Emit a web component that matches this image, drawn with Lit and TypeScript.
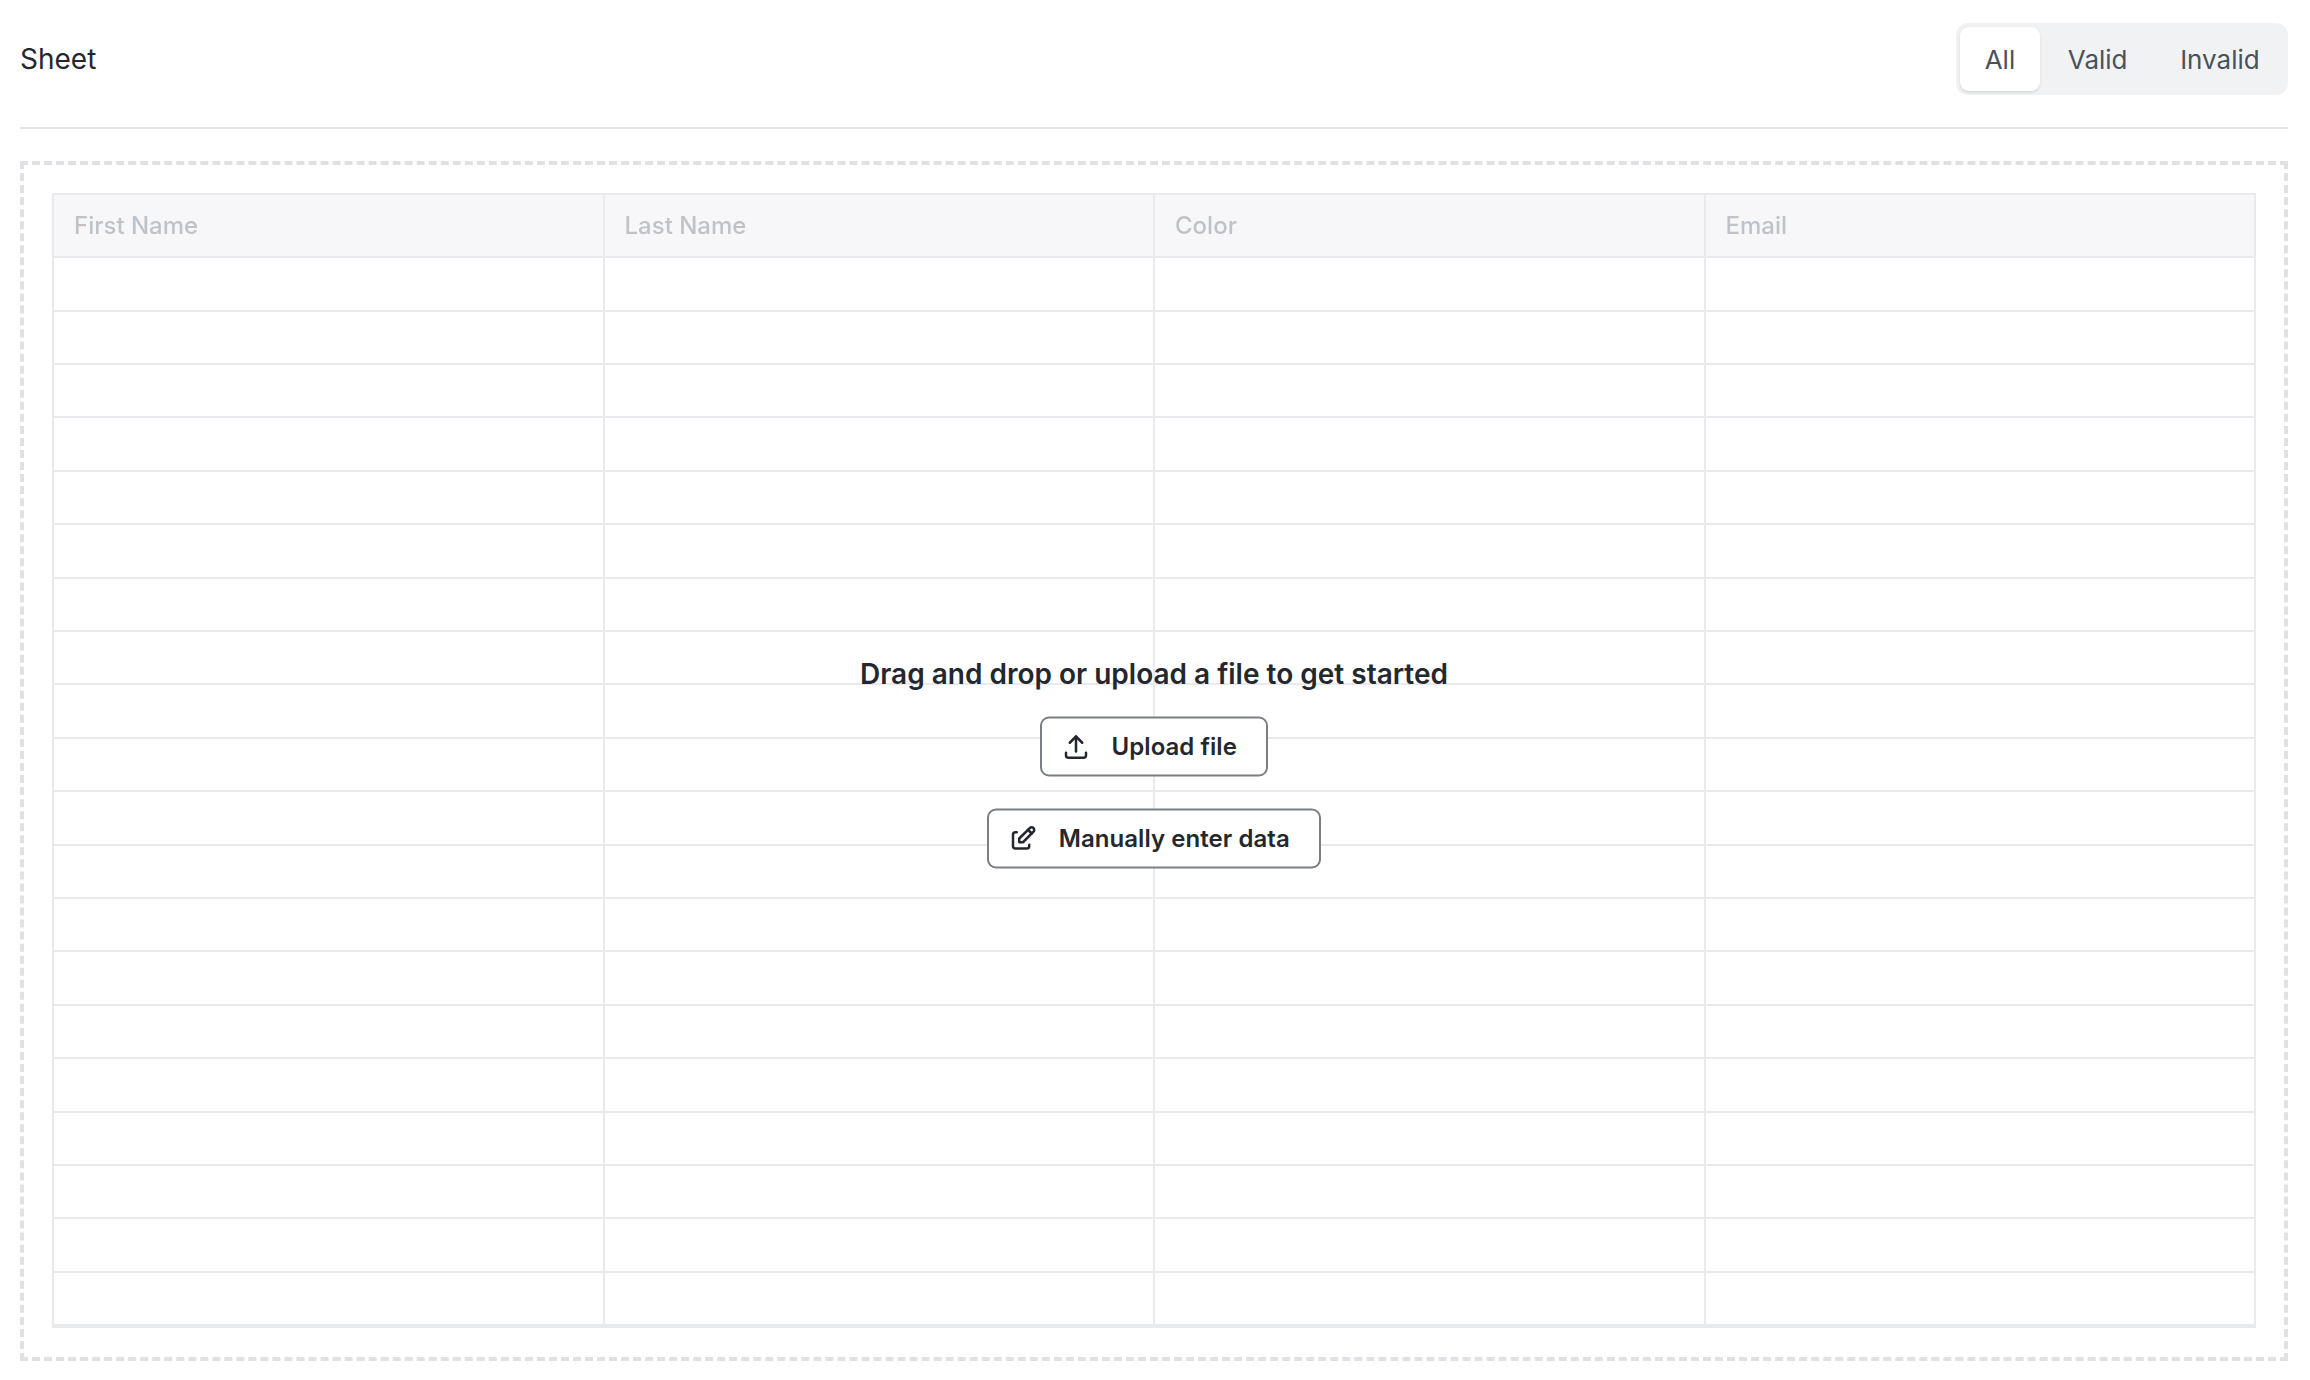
import { LitElement, html, css } from "lit";
import { customElement } from "lit/decorators.js";

const COLUMNS = ["First Name", "Last Name", "Color", "Email"];
const ROWS = Array.from({ length: 20 });

@customElement("app-root")
export class AppRoot extends LitElement {
  static styles = css`
    :host {
      display: block;
      box-sizing: border-box;
      width: 2310px;
      height: 1380px;
      padding: 0 22px 19px 20px;
      background: #fff;
      font-family: Inter, "Liberation Sans", sans-serif;
      color: #24282e;
      overflow: hidden;
    }
    * { box-sizing: border-box; }
    .header {
      display: flex;
      align-items: center;
      justify-content: space-between;
      padding: 23px 0 32px;
      border-bottom: 2px solid #e5e7eb;
    }
    .title { font-size: 28px; line-height: 36px; font-weight: 400; }
    .segments {
      display: flex;
      gap: 4px;
      height: 72px;
      padding: 4px;
      border-radius: 12px;
      background: #f1f2f4;
    }
    .segment {
      display: flex;
      align-items: center;
      padding: 0 24.3px;
      font-size: 26px;
      color: #4b5158;
      border-radius: 9px;
    }
    .segment.active {
      background: #fff;
      box-shadow: 0 1.5px 3px rgba(16, 24, 40, 0.1);
    }
    .drop {
      position: relative;
      margin-top: 32px;
      height: 1200px;
      padding: 28px;
      border: 4px dashed #dfe1e4;
    }
    .sheet {
      display: grid;
      grid-template-columns: repeat(3, 550.5px) 1fr;
      grid-template-rows: 65.3px repeat(20, 53.4px);
      border-bottom: 2px solid #e9eaee;
      filter: blur(0.6px);
    }
    .cell { border-bottom: 2px solid #e9eaee; border-left: 2px solid #e9eaee; }
    .cell.end { border-right: 2px solid #e9eaee; }
    .cell.head {
      display: flex;
      align-items: center;
      padding-left: 20px;
      border-top: 2px solid #e9eaee;
      background: #f7f7f9;
      font-size: 24px;
      font-weight: 500;
      color: #bfc3c8;
    }
    .overlay {
      position: absolute;
      inset: 0;
      display: flex;
      flex-direction: column;
      align-items: center;
      justify-content: center;
      transform: translateY(-0.5px);
    }
    .message { font-size: 28px; line-height: 40px; font-weight: 600; margin-bottom: 23px; }
    .btn {
      display: flex;
      align-items: center;
      gap: 21px;
      height: 60px;
      padding: 0 29.5px 0 19px;
      background: #fff;
      border: 2px solid #7b7e82;
      border-radius: 9px;
      font-size: 24px;
      font-weight: 600;
      letter-spacing: 0.05px;
    }
    .btn + .btn { margin-top: 32px; }
    .btn svg { width: 30px; height: 30px; display: block; flex: none; }
  `;

  render() {
    return html`
      <div class="header">
        <div class="title">Sheet</div>
        <div class="segments">
          <div class="segment active">All</div>
          <div class="segment">Valid</div>
          <div class="segment">Invalid</div>
        </div>
      </div>
      <div class="drop">
        <div class="sheet">
          ${COLUMNS.map((c, i) => html`<div class="cell head ${i === 3 ? "end" : ""}">${c}</div>`)}
          ${ROWS.map(() => COLUMNS.map((_, i) => html`<div class="cell ${i === 3 ? "end" : ""}"></div>`))}
        </div>
        <div class="overlay">
          <div class="message">Drag and drop or upload a file to get started</div>
          <div class="btn">
            <svg viewBox="0 0 24 24" fill="none" stroke="currentColor" stroke-width="2" stroke-linecap="round" stroke-linejoin="round">
              <path d="M4 17v2a2 2 0 0 0 2 2h12a2 2 0 0 0 2-2v-2" /><path d="M7 9l5-5 5 5" /><path d="M12 4v12" />
            </svg>
            Upload file
          </div>
          <div class="btn">
            <svg viewBox="0 0 24 24" fill="none" stroke="currentColor" stroke-width="2" stroke-linecap="round" stroke-linejoin="round">
              <path d="M7 7h-1a2 2 0 0 0-2 2v9a2 2 0 0 0 2 2h9a2 2 0 0 0 2-2v-1" /><path d="M20.385 6.585a2.1 2.1 0 0 0-2.97-2.97l-8.415 8.385v3h3l8.385-8.415z" /><path d="M16 5l3 3" />
            </svg>
            Manually enter data
          </div>
        </div>
      </div>
    `;
  }
}
